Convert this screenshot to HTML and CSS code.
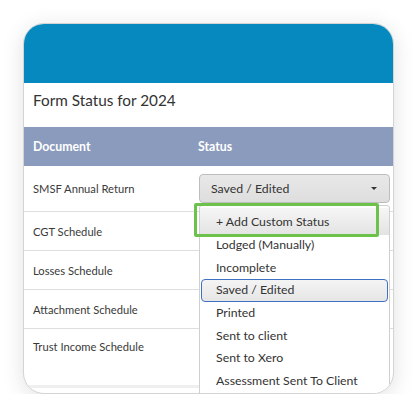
FILE: index.html
```html
<!DOCTYPE html>
<html>
<head>
<meta charset="utf-8">
<link rel="stylesheet" href="styles.css">
</head>
<body>
<div class="card">
  <div class="banner"></div>
  <div class="title">Form Status for 2024</div>
  <div class="thead">
    <div class="col-doc">Document</div>
    <div class="col-status">Status</div>
  </div>
  <div class="row first">
    <div class="col-doc">SMSF Annual Return</div>
    <div class="col-status">
      <div class="select">
        <span>Saved / Edited</span>
        <span class="caret"></span>
      </div>
    </div>
  </div>
  <div class="row"><div class="col-doc">CGT Schedule</div></div>
  <div class="row"><div class="col-doc">Losses Schedule</div></div>
  <div class="row"><div class="col-doc">Attachment Schedule</div></div>
  <div class="row tall"><div class="col-doc">Trust Income Schedule</div></div>
  <div class="band"></div>

  <div class="menu">
    <div class="item hover">+ Add Custom Status</div>
    <div class="item">Lodged (Manually)</div>
    <div class="item">Incomplete</div>
    <div class="item selected">Saved / Edited</div>
    <div class="item">Printed</div>
    <div class="item">Sent to client</div>
    <div class="item">Sent to Xero</div>
    <div class="item">Assessment Sent To Client</div>
  </div>
  <div class="highlight"></div>
</div>
</body>
</html>
```
FILE: styles.css
```css
* { box-sizing: border-box; }
html, body {
  margin: 0;
  padding: 0;
  background: #ffffff;
}
body {
  padding: 23px 0 0 23px;
  font-family: "Lato", "Liberation Sans", sans-serif;
  color: #333333;
}
.card {
  position: relative;
  width: 371px;
  height: 371px;
  border: 1px solid #d4d4d4;
  border-radius: 21px;
  overflow: hidden;
  background: #ffffff;
  box-shadow: 0 4px 22px rgba(0, 0, 0, 0.12);
}
.banner {
  height: 59px;
  background: #0689bf;
}
.title {
  height: 44px;
  padding: 8px 0 0 9px;
  font-size: 15.3px;
  line-height: 18px;
  color: #333333;
}
.thead {
  display: flex;
  align-items: center;
  height: 39px;
  background: #8a9bbd;
  color: #ffffff;
  font-weight: 700;
  font-size: 12.3px;
}
.col-doc {
  width: 174px;
  padding-left: 9px;
  flex: none;
}
.col-status {
  flex: 1;
  padding-right: 3px;
}
.row {
  display: flex;
  align-items: center;
  height: 39px;
  border-top: 1px solid #dedede;
  font-size: 11.2px;
  color: #3a3a3a;
}
.thead + .row { border-top: none; }
.row.first { height: 45px; }
.row.tall {
  height: 57px;
  align-items: flex-start;
  padding-top: 11px;
}
.select {
  display: flex;
  align-items: center;
  justify-content: space-between;
  margin-left: 1px;
  height: 29px;
  padding: 0 11px 0 11px;
  border: 1px solid #bdbdbd;
  border-radius: 4px;
  background: linear-gradient(#e8e8e8, #dedede);
  font-size: 12.3px;
  color: #333333;
}
.caret {
  width: 0;
  height: 0;
  margin-right: 1px;
  border-left: 3.5px solid transparent;
  border-right: 3.5px solid transparent;
  border-top: 3.5px solid #333333;
}
.band {
  height: 3px;
  background: #efefef;
}
.menu {
  position: absolute;
  left: 175px;
  top: 181px;
  width: 191px;
  height: 200px;
  padding-top: 2px;
  background: #ffffff;
  border: 1px solid #cfcfcf;
  border-radius: 3px;
  font-size: 12.3px;
  color: #333333;
}
.item {
  height: 22.7px;
  line-height: 22.7px;
  padding-left: 16px;
}
.item.hover {
  height: 27px;
  line-height: 27px;
  background: linear-gradient(#f6f6f6, #e3e3e3);
  margin-bottom: -1px;
}
.item.selected {
  margin: 0 1px;
  padding-left: 14px;
  border: 1.5px solid #3f71c2;
  border-radius: 4px;
  background: linear-gradient(#f4f4f4, #e6e6e6);
  line-height: 19.5px;
}
.highlight {
  position: absolute;
  left: 170px;
  top: 179px;
  width: 185px;
  height: 34px;
  border: 3px solid #6cc24a;
  border-radius: 2px;
}
```
